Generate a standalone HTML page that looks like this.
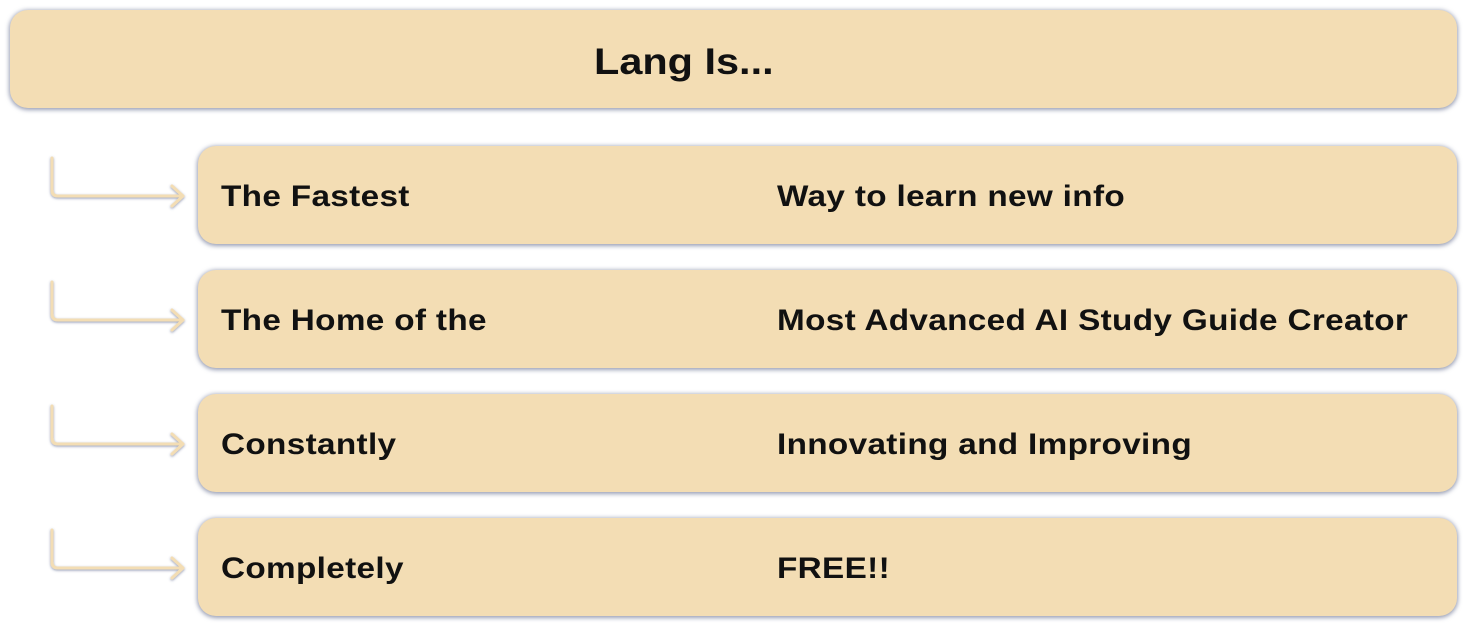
<!DOCTYPE html>
<html><head><style>
html,body{margin:0;padding:0;background:#fff;width:1467px;height:627px;overflow:hidden;font-family:"Liberation Sans",sans-serif;}
.box{position:absolute;background:#f3ddb4;border-radius:18px;box-shadow:0 1px 4px 1px rgba(70,80,120,.55);}
.h{left:10px;top:10px;width:1447px;height:98px;}
.h span{position:absolute;left:584px;top:33px;font-weight:bold;font-size:37px;line-height:1;color:#111;transform:scaleX(1.12);transform-origin:0 0;white-space:nowrap;}
.r{left:198px;width:1259px;height:98px;}
.r span{position:absolute;top:36px;font-weight:bold;font-size:30px;line-height:1;color:#111;letter-spacing:.3px;transform:scaleX(1.11);transform-origin:0 0;white-space:nowrap;}
.a{left:23px}.b{left:579px}
svg{position:absolute;left:0;top:0;}
</style></head><body>
<div class="box h"><span>Lang Is...</span></div>
<div class="box r" style="top:146px"><span class="a">The Fastest</span><span class="b">Way to learn new info</span></div>
<div class="box r" style="top:270px"><span class="a">The Home of the</span><span class="b">Most Advanced AI Study Guide Creator</span></div>
<div class="box r" style="top:394px"><span class="a">Constantly</span><span class="b">Innovating and Improving</span></div>
<div class="box r" style="top:518px"><span class="a">Completely</span><span class="b">FREE!!</span></div>
<svg width="200" height="627">
<defs><filter id="s" x="-20%" y="-20%" width="140%" height="140%"><feDropShadow dx="0" dy="1" stdDeviation="1.3" flood-color="#4a5580" flood-opacity=".6"/></filter></defs>
<g fill="none" stroke="#f3ddb4" stroke-width="3" stroke-linecap="round" stroke-linejoin="round" filter="url(#s)">
<path d="M52 158V190q0 6 6 6H183M172 186l11 10-11 10"/>
<path d="M52 282V314q0 6 6 6H183M172 310l11 10-11 10"/>
<path d="M52 406V438q0 6 6 6H183M172 434l11 10-11 10"/>
<path d="M52 530V562q0 6 6 6H183M172 558l11 10-11 10"/>
</g></svg>
</body></html>
